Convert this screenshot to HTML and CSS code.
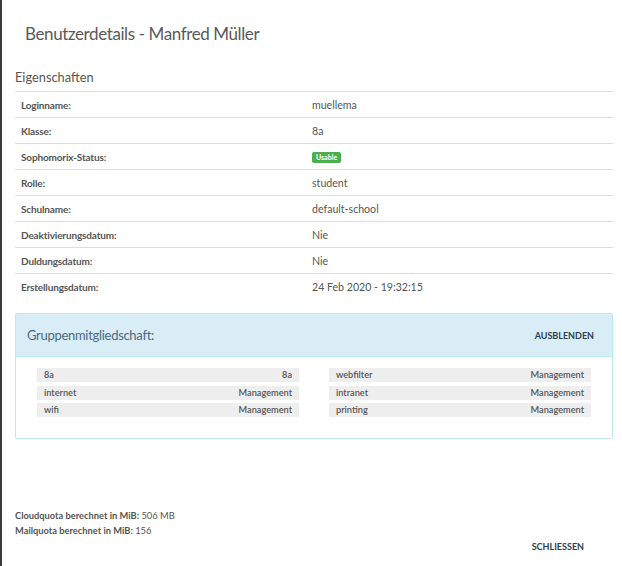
FILE: index.html
```html
<!DOCTYPE html>
<html lang="de">
<head>
<meta charset="utf-8">
<title>Benutzerdetails</title>
<link rel="stylesheet" href="styles.css">
</head>
<body>
<div class="page">
  <div class="modal-header">
    <h1 class="modal-title">Benutzerdetails - Manfred Müller</h1>
  </div>
  <div class="modal-body">
    <h2 class="section-title">Eigenschaften</h2>
    <table class="props">
      <tr><td class="k">Loginname:</td><td class="v">muellema</td></tr>
      <tr><td class="k">Klasse:</td><td class="v">8a</td></tr>
      <tr><td class="k">Sophomorix-Status:</td><td class="v"><span class="badge">Usable</span></td></tr>
      <tr><td class="k">Rolle:</td><td class="v">student</td></tr>
      <tr><td class="k">Schulname:</td><td class="v">default-school</td></tr>
      <tr><td class="k">Deaktivierungsdatum:</td><td class="v">Nie</td></tr>
      <tr><td class="k">Duldungsdatum:</td><td class="v">Nie</td></tr>
      <tr><td class="k">Erstellungsdatum:</td><td class="v">24 Feb 2020 - 19:32:15</td></tr>
    </table>

    <div class="panel">
      <div class="panel-heading">
        <span class="panel-title">Gruppenmitgliedschaft:</span>
        <span class="panel-action">AUSBLENDEN</span>
      </div>
      <div class="panel-body">
        <div class="groups">
          <div class="group"><span class="g-name">8a</span><span class="g-type">8a</span></div>
          <div class="group"><span class="g-name">webfilter</span><span class="g-type">Management</span></div>
          <div class="group"><span class="g-name">internet</span><span class="g-type">Management</span></div>
          <div class="group"><span class="g-name">intranet</span><span class="g-type">Management</span></div>
          <div class="group"><span class="g-name">wifi</span><span class="g-type">Management</span></div>
          <div class="group"><span class="g-name">printing</span><span class="g-type">Management</span></div>
        </div>
      </div>
    </div>

    <div class="quota">
      <div><b>Cloudquota berechnet in MiB:</b> 506 MB</div>
      <div><b>Mailquota berechnet in MiB:</b> 156</div>
    </div>
  </div>
  <div class="modal-footer">
    <span class="btn-close">SCHLIESSEN</span>
  </div>
</div>
</body>
</html>
```

FILE: styles.css
```css
html, body {
  margin: 0;
  padding: 0;
  background: #fff;
}
body {
  font-family: Lato, "Open Sans", sans-serif;
  color: #555;
}
.page {
  border-left: 2px solid #3a3a3a;
  min-height: 566px;
  box-sizing: border-box;
  padding: 0 9px 0 13px;
}
.modal-header {
  height: 66px;
  box-sizing: border-box;
  padding: 22px 0 0 10px;
}
.modal-title {
  margin: 0;
  font-size: 17px;
  font-weight: 400;
  letter-spacing: -0.4px;
  line-height: 24px;
  color: #5a5a5a;
}
.section-title {
  margin: 0;
  height: 25px;
  font-size: 12.8px;
  font-weight: 400;
  line-height: 22px;
  color: #555;
}
.props {
  width: 100%;
  border-collapse: collapse;
  font-size: 11px;
}
.props td {
  border-top: 1px solid #ddd;
  height: 25px;
  padding: 0 6px;
  vertical-align: middle;
}
.props td.k {
  font-weight: 700;
  font-size: 10px;
  letter-spacing: -0.15px;
  width: 279px;
}
.props td.v {
  font-size: 10.6px;
}
.badge {
  display: inline-block;
  background: #4cae4f;
  color: #fff;
  font-size: 7px;
  font-weight: 700;
  line-height: 11px;
  padding: 0 4px;
  border-radius: 2px;
  vertical-align: middle;
}
.panel {
  margin-top: 14px;
  border: 1px solid #bce8f1;
  border-radius: 2px;
}
.panel-heading {
  background: #d9edf7;
  border-bottom: 1px solid #bce8f1;
  height: 43px;
  box-sizing: border-box;
  display: flex;
  align-items: center;
  justify-content: space-between;
  padding: 0 18px 0 11px;
}
.panel-title {
  font-size: 13px;
  letter-spacing: -0.3px;
  color: #4a6a80;
}
.panel-action {
  font-size: 9px;
  font-weight: 700;
  color: #2c3e50;
}
.panel-body {
  padding: 11px 21px 20px 21px;
  height: 81px;
  box-sizing: border-box;
}
.groups {
  display: grid;
  grid-template-columns: 1fr 1fr;
  column-gap: 30px;
  row-gap: 3.5px;
}
.group {
  display: flex;
  justify-content: space-between;
  background: #eee;
  font-size: 9.2px;
  font-weight: 600;
  line-height: 14px;
  padding: 0 7px;
}
.quota {
  margin-top: 69px;
  font-size: 9.3px;
  line-height: 15px;
}
.quota b {
  font-weight: 700;
}
.modal-footer {
  display: flex;
  justify-content: flex-end;
  padding: 3px 29px 0 0;
}
.btn-close {
  font-size: 9px;
  font-weight: 700;
  color: #2c3e50;
}
```
